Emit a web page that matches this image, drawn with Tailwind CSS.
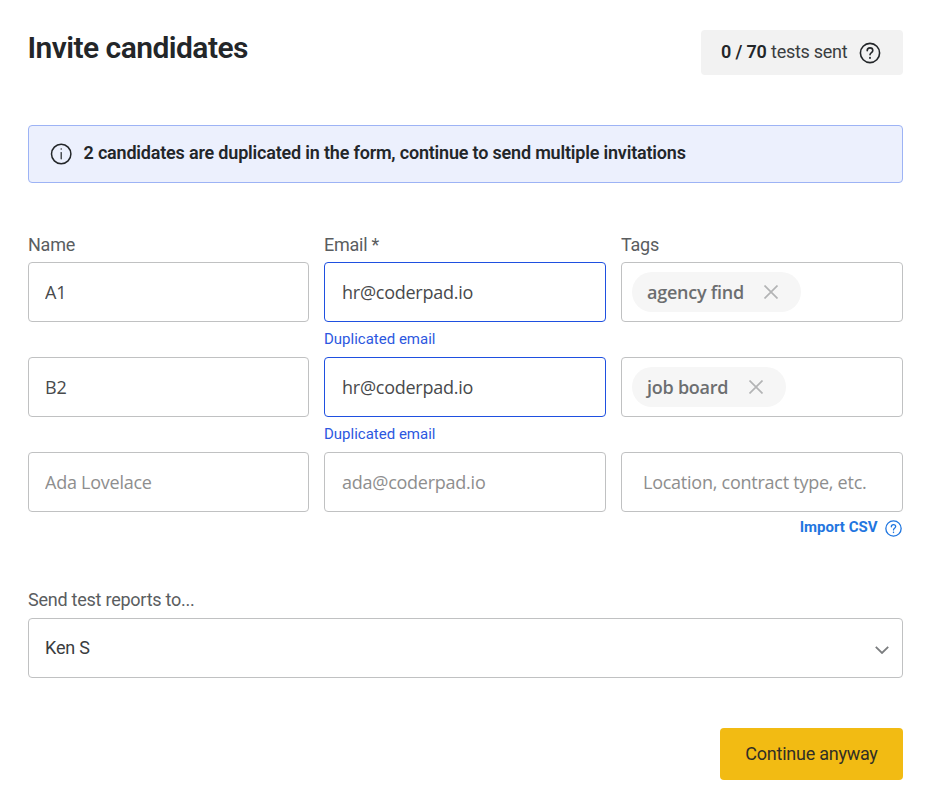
<!DOCTYPE html>
<html lang="en">
<head>
    <meta charset="UTF-8">
    <title>Invite candidates</title>
    <script src="https://cdn.jsdelivr.net/npm/@tailwindcss/browser@4"></script>
</head>
<body class="bg-white font-['Roboto',sans-serif] text-lg tracking-[-0.19px] text-[#232629]">
    <div class="w-[903px] pl-7 pt-[30px]">
        <header class="flex justify-between">
            <h1 class="-ml-[0.5px] text-[30px] leading-9 font-semibold tracking-[-0.55px]">Invite candidates</h1>
            <div class="flex h-[45px] w-[202px] items-center rounded bg-[#f2f2f2] pl-5">
                <p class="w-[138px] whitespace-nowrap pb-0.5 leading-6"><b class="font-semibold tracking-[-0.15px]">0 / 70</b> <span class="tracking-[-0.28px] text-[#3a3d40]">tests sent</span></p>
                <svg class="size-[22px]" viewBox="0 0 22 22" fill="none" stroke="currentColor" stroke-width="1.6" stroke-linecap="round">
                    <circle cx="11" cy="11" r="9.6"/>
                    <path d="M8.2 8.7C8.2 7 9.4 5.9 11 5.9s2.8 1.1 2.8 2.6c0 2.1-2.8 2.1-2.8 4.3"/>
                    <path d="M11 15.8v.2" stroke-width="1.9"/>
                </svg>
            </div>
        </header>

        <div class="mt-[50px] flex h-[58px] items-center rounded border border-[#9db3f5] bg-[#ecf0fd] pl-[21px]">
            <svg class="size-[22px]" viewBox="0 0 22 22" fill="none" stroke="currentColor" stroke-width="1.5" stroke-linecap="round">
                <circle cx="11.2" cy="11" r="9.7"/>
                <path d="M11.2 9.5v6.3" stroke-width="1.2"/>
                <path d="M11.2 6v.1" stroke-width="1.4"/>
            </svg>
            <p class="ml-[11.5px] pb-0.5 font-semibold leading-6">2 candidates are duplicated in the form, continue to send multiple invitations</p>
        </div>

        <form>
            <div class="mt-[50px] grid grid-cols-[281px_282px_282px] gap-x-[15px] leading-6 tracking-[-0.25px] text-[#5a5d5f]">
                <label>Name</label>
                <label>Email *</label>
                <label>Tags</label>
            </div>
            <div class="mt-[5px] grid h-[95px] grid-cols-[281px_282px_282px] items-start gap-x-[15px]">
                <input type="text" value="A1" class="h-[60px] w-full rounded border border-[#c0c1c2] px-4 font-['Open_Sans',sans-serif] tracking-[-0.25px] text-[#484a4c]">
                <div>
                    <input type="text" value="hr@coderpad.io" class="block h-[60px] w-full rounded border border-[#1f50e0] px-[17px] font-['Open_Sans',sans-serif] tracking-[-0.25px] text-[#484a4c]">
                    <p class="mt-[7px] text-[15px] leading-5 tracking-normal text-[#2c58e0]">Duplicated email</p>
                </div>
                <div class="flex h-[60px] items-center rounded border border-[#c0c1c2] pl-2.5">
                    <span class="flex h-10 w-[169px] items-center justify-between rounded-full bg-[#f6f6f6] pl-[15px] pr-[23px] font-['Open_Sans',sans-serif] font-semibold tracking-[-0.25px] text-[#6c6e70]">agency find
                        <svg class="size-3.5" viewBox="0 0 14 14" fill="none" stroke="#b3b4b5" stroke-width="1.7"><path d="M.5.5l13 13M13.5.5l-13 13"/></svg>
                    </span>
                </div>
            </div>
            <div class="grid h-[95px] grid-cols-[281px_282px_282px] items-start gap-x-[15px]">
                <input type="text" value="B2" class="h-[60px] w-full rounded border border-[#c0c1c2] px-4 font-['Open_Sans',sans-serif] tracking-[-0.25px] text-[#484a4c]">
                <div>
                    <input type="text" value="hr@coderpad.io" class="block h-[60px] w-full rounded border border-[#1f50e0] px-[17px] font-['Open_Sans',sans-serif] tracking-[-0.25px] text-[#484a4c]">
                    <p class="mt-[7px] text-[15px] leading-5 tracking-normal text-[#2c58e0]">Duplicated email</p>
                </div>
                <div class="flex h-[60px] items-center rounded border border-[#c0c1c2] pl-2.5">
                    <span class="flex h-10 w-[154px] items-center justify-between rounded-full bg-[#f6f6f6] pl-[15px] pr-[23px] font-['Open_Sans',sans-serif] font-semibold tracking-[-0.25px] text-[#6c6e70]">job board
                        <svg class="size-3.5" viewBox="0 0 14 14" fill="none" stroke="#b3b4b5" stroke-width="1.7"><path d="M.5.5l13 13M13.5.5l-13 13"/></svg>
                    </span>
                </div>
            </div>
            <div class="grid h-[60px] grid-cols-[281px_282px_282px] items-start gap-x-[15px]">
                <input type="text" placeholder="Ada Lovelace" class="h-[60px] w-full rounded border border-[#c0c1c2] px-4 font-['Open_Sans',sans-serif] tracking-[-0.25px] placeholder:text-[#8e8e8e]">
                <input type="text" placeholder="ada@coderpad.io" class="h-[60px] w-full rounded border border-[#c0c1c2] px-[17px] font-['Open_Sans',sans-serif] tracking-[-0.25px] placeholder:text-[#8e8e8e]">
                <input type="text" placeholder="Location, contract type, etc." class="h-[60px] w-full rounded border border-[#c0c1c2] px-[21px] font-['Open_Sans',sans-serif] tracking-[-0.25px] placeholder:text-[#8e8e8e]">
            </div>

            <div class="mt-[5px] flex justify-end pr-[1.5px] text-[#1f76e0]">
                <a class="text-[15px] font-bold leading-5 tracking-normal">Import CSV</a>
                <svg class="ml-[7px] mt-[2.5px] size-[17px]" viewBox="0 0 22 22" fill="none" stroke="currentColor" stroke-width="1.7" stroke-linecap="round">
                    <circle cx="11" cy="11" r="9.9"/>
                    <path d="M8.2 8.7C8.2 7 9.4 5.9 11 5.9s2.8 1.1 2.8 2.6c0 2.1-2.8 2.1-2.8 4.3"/>
                    <path d="M11 15.8v.2" stroke-width="2"/>
                </svg>
            </div>

            <label class="mt-[50.5px] block leading-6 tracking-[-0.24px] text-[#5a5d5f]">Send test reports to...</label>
            <div class="mt-1.5 flex h-[60px] items-center justify-between rounded border border-[#c0c1c2] pl-4 pr-[13px]">
                <span class="text-[#3a3d40]">Ken S</span>
                <svg class="mt-1 h-2 w-3.5" viewBox="0 0 14 8" fill="none" stroke="#7b7d7f" stroke-width="1.8"><path d="M.8.8L7 7l6.2-6.2"/></svg>
            </div>

            <button type="button" class="ml-auto mt-[50px] block h-[52px] w-[183px] rounded bg-[#f2bb13] tracking-[-0.25px] text-[#302e26]">Continue anyway</button>
        </form>
    </div>
</body>
</html>
